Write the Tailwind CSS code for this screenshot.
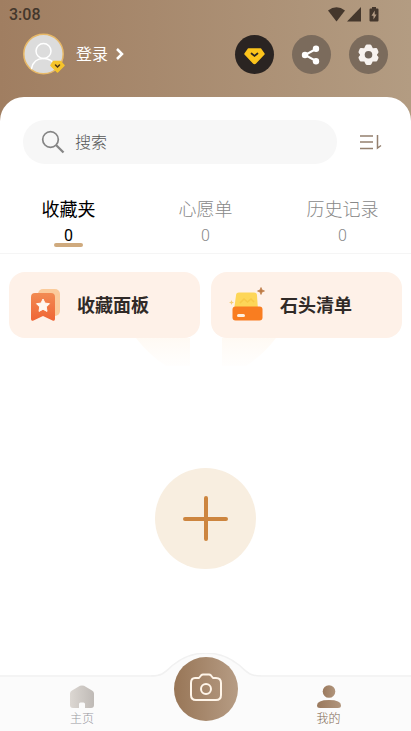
<!DOCTYPE html>
<html lang="zh-CN">
<head>
<meta charset="utf-8">
<meta name="viewport" content="width=device-width, initial-scale=1">
<title>我的</title>
<script src="https://cdn.jsdelivr.net/npm/@tailwindcss/browser@4"></script>
</head>
<body class="flex min-h-screen flex-col bg-linear-to-r from-[#a07e61] to-[#b39c82] font-['Roboto','Noto_Sans_CJK_SC',sans-serif] text-black">
<header class="pb-[22px]">
  <div class="flex h-7 items-center justify-between pr-8 pl-[9px] text-[#44372c]">
    <span class="pt-px text-base font-medium">3:08</span>
    <div class="flex items-center" aria-hidden="true">
      <svg class="mr-0.5 h-[15px] w-[17px]" viewBox="0 0 17 15" fill="currentColor"><path d="M0 3.500Q8.500-3 17 3.500L8.500 14.500Z"/></svg>
      <svg class="mr-2 h-[15px] w-[14px]" viewBox="0 0 14 15" fill="currentColor"><path d="M14 0V14.500H0Z"/></svg>
      <svg class="h-[15px] w-[10px]" viewBox="0 0 10 15"><path fill="currentColor" d="M3 0H7V1.500H8.500Q9.500 1.500 9.500 2.500V13.500Q9.500 14.500 8.500 14.500H1.500Q.5 14.500 .5 13.500V2.500Q.5 1.500 1.500 1.500H3Z"/><path fill="#b59d85" d="M5.700 3.500 2.500 8.700H4.500V12.500L7.600 7.400H5.700Z"/></svg>
    </div>
  </div>
  <div class="mt-[5px] flex items-center justify-between px-[23px]">
    <a href="#login" class="flex items-center text-base text-white">
      <svg class="h-[42px] w-[42px]" viewBox="0 0 42 42" fill="none" aria-hidden="true">
        <circle cx="20.500" cy="21" r="19.700" fill="#dcdcdc" stroke="#e8b968" stroke-width="1.500"/>
        <g stroke="#fff" stroke-width="1.500" stroke-linecap="round"><circle cx="20.500" cy="18" r="7.500"/><path d="M8.500 35.500C10 28.500 14 25.500 20.500 25.500S30 28 32 33"/></g>
        <path d="M30.500 28.500H37.500L41 32.500 34.500 39 28 32.500Z" fill="#f6c42b" stroke="#f6c42b" stroke-width="1.500" stroke-linejoin="round"/>
        <path d="M32.500 32 34.500 34 36.500 32" stroke="#4b3518" stroke-width="1.500" stroke-linecap="round"/>
      </svg>
      <span class="ml-[11px] pt-0.5">登录</span>
      <svg class="ml-2 h-3 w-2" viewBox="0 0 8 12" fill="none" stroke="#fff" stroke-width="2.500" aria-hidden="true"><path d="M1 1 6 6 1 11"/></svg>
    </a>
    <div class="flex gap-[18px]">
      <button type="button" aria-label="会员" class="h-[39px] w-[39px] rounded-full bg-[#2a2422]">
        <svg viewBox="0 0 39 39" fill="none"><path d="M13.500 14H25.500L29 19 20.500 28Q19.500 29 18.500 28L10 19Z" fill="#fcc41c" stroke="#fcc41c" stroke-width="1.500" stroke-linejoin="round"/><path d="M16.500 18.500 19.500 21 22.500 18.500" stroke="#2a2422" stroke-width="1.700" stroke-linecap="round"/></svg>
      </button>
      <button type="button" aria-label="分享" class="h-[39px] w-[39px] rounded-full bg-[#7b6b5c]">
        <svg viewBox="0 0 39 39" fill="#fff" stroke="#fff"><path d="M24 14 13 20 24 26" fill="none" stroke-width="2"/><g stroke="none"><circle cx="24" cy="13.800" r="3.200"/><circle cx="13" cy="20" r="3.200"/><circle cx="24" cy="26.200" r="3.200"/></g></svg>
      </button>
      <button type="button" aria-label="设置" class="h-[39px] w-[39px] rounded-full bg-[#7b6b5c]">
        <svg viewBox="0 0 39 39"><path fill="#f7f2ef" stroke="#f7f2ef" stroke-width="3" stroke-linejoin="round" d="M18 11H21L22.500 14 24 14.800 27 14.500 28 17 26.500 19V20.500L28 22.600 27 25 24 24.800 22.500 25.500 21 28.500H18L16.500 25.500 15 24.800 12 25 11 22.600 12.500 20.500V19L11 17 12 14.500 15 14.800 16.500 14Z"/><circle cx="19.500" cy="19.700" r="3.800" fill="#74675d"/></svg>
      </button>
    </div>
  </div>
</header>

<div class="flex flex-1 flex-col rounded-t-3xl bg-white">
  <form class="mt-[23px] flex items-center pr-7 pl-[23px]" role="search">
    <div class="flex h-11 flex-1 items-center rounded-full bg-[#f7f7f7] pl-[18px]">
      <label for="q" aria-label="搜索" class="shrink-0">
        <svg class="h-6 w-6" viewBox="0 0 24 24" fill="none" stroke="#858585" aria-hidden="true"><circle cx="9.500" cy="9.500" r="7.800" stroke-width="1.700"/><path d="M15 15 22.500 22.500" stroke-width="2.300"/></svg>
      </label>
      <input id="q" type="search" placeholder="搜索" class="ml-2.5 w-full min-w-0 bg-transparent pt-0.5 text-base font-light outline-none placeholder:text-[#555]">
    </div>
    <button type="button" aria-label="排序" class="ml-[22px]">
      <svg class="h-4 w-6" viewBox="0 0 24 16" fill="none" stroke="#94806f" stroke-width="1.500"><path d="M1 2H14M1 8H14M1 14.500H14M18.500 1V14L22 11.500"/></svg>
    </button>
  </form>

  <nav class="mt-8 grid h-[58px] grid-cols-3 border-b border-[#f5f5f5] text-center font-light text-[#888]" aria-label="列表">
    <a href="#favorites" aria-current="page" class="flex flex-col items-center font-normal text-black"><span class="text-lg leading-7">收藏夹</span><span class="text-base leading-6">0</span><span class="-mt-[5px] h-1 w-[29px] rounded-full bg-[#cfaa7e]"></span></a>
    <a href="#wishes" class="flex flex-col items-center"><span class="text-lg leading-7">心愿单</span><span class="text-base leading-6">0</span></a>
    <a href="#history" class="flex flex-col items-center"><span class="text-lg leading-7">历史记录</span><span class="text-base leading-6">0</span></a>
  </nav>

  <main class="flex flex-1 flex-col pt-[18px]">
    <div class="grid grid-cols-2 gap-[11px] px-[9px] text-lg font-bold text-[#302a27]">
      <a href="#panel" class="flex h-[66px] items-center rounded-2xl bg-[#fef1e8] pl-[21px]">
        <svg class="h-9 w-9" viewBox="0 0 36 36" aria-hidden="true">
          <defs><linearGradient id="ribbon" x1="0" y1="0" x2="0" y2="1"><stop stop-color="#f28b52"/><stop offset="1" stop-color="#ef6535"/></linearGradient></defs>
          <rect x="8" y="2" width="22" height="27" rx="5" fill="#fbcb9b"/>
          <path d="M5 6H21Q25 6 25 10V32Q25 34.500 22.500 33.500L13 29 3.500 33.500Q1 34.500 1 32V10Q1 6 5 6Z" fill="url(#ribbon)"/>
          <path d="M13 12 15 16.100 19.500 16.700 16.300 19.900 17 24.400 13 22.300 9 24.400 9.700 19.900 6.500 16.700 11 16.100Z" fill="#fff8f0" stroke="#fff8f0" stroke-linejoin="round"/>
        </svg>
        <span class="ml-[11px] pt-0.5">收藏面板</span>
      </a>
      <a href="#stones" class="flex h-[66px] items-center rounded-2xl bg-[#fef1e8] pl-[18px]">
        <svg class="h-9 w-9" viewBox="0 0 36 36" aria-hidden="true">
          <path d="M10 5.500H25Q28 5.500 28 8.500L29 23H5L7 8.500Q7 5.500 10 5.500Z" fill="#fdd658"/>
          <path d="M11 16 15 12 18.500 15 22 12 25 15" fill="none" stroke="#f8c947" stroke-width="1.500"/>
          <rect x="3.500" y="19.500" width="30" height="14" rx="3" fill="#f97d20"/>
          <rect x="8" y="27" width="8" height="3" rx="1.500" fill="#fff0df"/>
          <path d="M32 .5 33 3 35.500 4 33 5 32 7.500 31 5 28.500 4 31 3Z" fill="#bd7b45" stroke="#bd7b45" stroke-width=".7"/>
          <path d="M2.500 13 3.200 14.800 5 15.500 3.200 16.200 2.500 18 1.800 16.200 0 15.500 1.800 14.800Z" fill="#f5ce77"/>
        </svg>
        <span class="ml-[15px] pt-0.5">石头清单</span>
      </a>
    </div>
    <div class="relative flex flex-1 items-center justify-center pt-6">
      <svg class="absolute top-0 left-1/2 h-12 w-[140px] -translate-x-1/2" viewBox="0 0 140 48" aria-hidden="true"><defs><linearGradient id="glow" x1="0" y1="0" x2="0" y2="1"><stop stop-color="#fffaf4"/><stop offset="1" stop-color="#fffefd"/></linearGradient></defs><path d="M0 0H54V28H30Q12 16 0 0ZM86 0H140Q128 16 110 28H86Z" fill="url(#glow)"/></svg>
      <button type="button" aria-label="添加" class="h-[101px] w-[101px] rounded-full bg-[#f8eee0]">
        <svg viewBox="0 0 101 101" fill="none" stroke="#cd853f" stroke-width="4" stroke-linecap="round"><path d="M30 51H71M51 30V71"/></svg>
      </button>
    </div>
  </main>

  <nav class="sticky bottom-0 grid h-14 grid-cols-3 border-t-2 border-[#f4f4f4] bg-[#fbfbfb] text-center text-xs font-light" aria-label="主导航">
    <a href="#home" class="flex flex-col items-center pt-2 pl-[27px] text-[#98989e]">
      <svg class="h-6 w-6" viewBox="0 0 24 24" aria-hidden="true"><defs><linearGradient id="home"><stop stop-color="#dcd7d2"/><stop offset="1" stop-color="#bfbab6"/></linearGradient></defs><path fill="url(#home)" d="M10 .8Q12 0 14 .8L22 5.500Q24 6.500 24 8.500V20Q24 23 21 23H15V19Q15 17.500 13.500 17.500H10.500Q9 17.500 9 19V23H3Q0 23 0 20V8.500Q0 6.500 2 5.500Z"/></svg>
      <span class="leading-5">主页</span>
    </a>
    <div class="relative">
      <svg class="absolute -top-6 left-1/2 h-12 w-[110px] -translate-x-1/2" viewBox="0 0 110 48" aria-hidden="true"><path d="M0 23C12 23 14 19 22 12C42-4 68-4 88 12C96 19 98 23 110 23V48H0Z" fill="#fbfbfb"/><path d="M0 23C12 23 14 19 22 12C42-4 68-4 88 12C96 19 98 23 110 23" fill="none" stroke="#f1f1f1" stroke-width="1.500"/></svg>
      <button type="button" aria-label="拍照识别" class="absolute -top-5 left-1/2 h-16 w-16 -translate-x-1/2 rounded-full bg-linear-to-r from-[#987657] to-[#b69c84]">
        <svg viewBox="0 0 64 64" fill="none" stroke="#fff5e9" stroke-width="2"><path d="M21 21H25L27 18.500Q28 17.500 29 17.500H35Q36 17.500 37 18.500L39 21H42Q47 21 47 26V38Q47 43 42 43H22Q17 43 17 38V26Q17 21 21 21Z" stroke-linejoin="round"/><circle cx="32" cy="32" r="5"/></svg>
      </button>
    </div>
    <a href="#me" aria-current="page" class="flex flex-col items-center pt-2 pr-7 text-[#7f6853]">
      <svg class="h-6 w-6" viewBox="0 0 24 24" aria-hidden="true"><defs><linearGradient id="me"><stop stop-color="#9a795d"/><stop offset="1" stop-color="#b1957c"/></linearGradient></defs><g fill="url(#me)"><circle cx="12" cy="6.500" r="6.300"/><path d="M0 20.500Q0 15 12 15T24 20.500Q24 23 21 23H3Q0 23 0 20.500Z"/></g></svg>
      <span class="leading-5">我的</span>
    </a>
  </nav>
</div>
</body>
</html>
